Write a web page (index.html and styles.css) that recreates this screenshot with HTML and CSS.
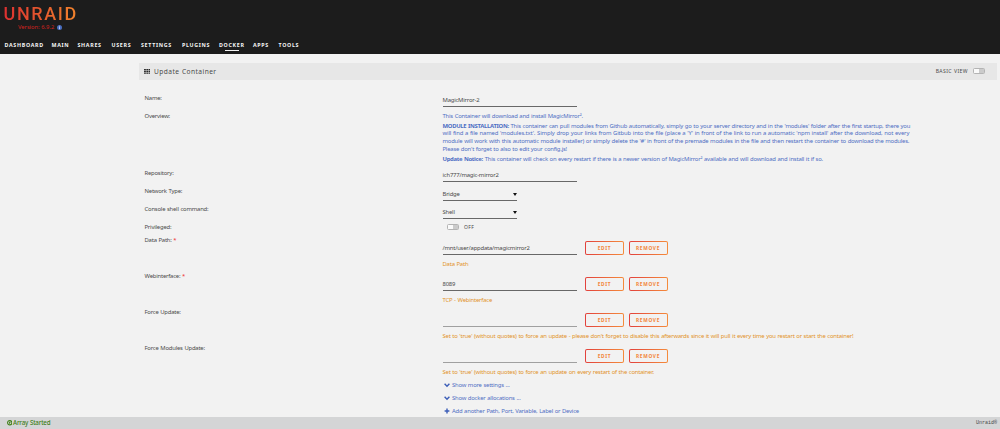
FILE: index.html
```html
<!DOCTYPE html>
<html>
<head>
    <meta charset="utf-8">
    <title>Update Container</title>
    <link rel="stylesheet" href="styles.css">
</head>
<body>
    <div id="header">
        <div class="logo">UNRAID</div>
        <div class="version">Version: 6.9.2
            <svg class="info" viewBox="0 0 12 12"><circle cx="6" cy="6" r="6" fill="#4a6ec0"/><path d="M6 2v2M6 5v5" stroke="#cdd8f5" stroke-width="2"/></svg>
        </div>
        <div id="menu">
            <a class="m1">DASHBOARD</a>
            <a class="m2">MAIN</a>
            <a class="m3">SHARES</a>
            <a class="m4">USERS</a>
            <a class="m5">SETTINGS</a>
            <a class="m6">PLUGINS</a>
            <a class="m7 active">DOCKER</a>
            <a class="m8">APPS</a>
            <a class="m9">TOOLS</a>
        </div>
    </div>

    <div id="title">
        <svg class="grid" viewBox="0 0 14 12"><path d="M0 0h4v3H0zM5 0h4v3H5zM10 0h4v3h-4zM0 4.5h4v3H0zM5 4.5h4v3H5zM10 4.5h4v3h-4zM0 9h4v3H0zM5 9h4v3H5zM10 9h4v3h-4z"/></svg>
        <span class="name">Update Container</span>
        <span class="view">BASIC VIEW</span>
        <span class="switch"></span>
    </div>

    <div id="form">
        <div class="row"><label>Name:</label><div class="input">MagicMirror-2</div></div>
        <div class="row overview">
            <label>Overview:</label>
            <div class="desc">
                <p>This Container will download and install MagicMirror².</p>
                <p><b>MODULE INSTALLATION:</b> This container can pull modules from Github automatically, simply go to your server directory and in the 'modules' folder after the first startup, there you<br>
                <span class="wide">will find a file named 'modules.txt'. Simply drop your links from Gitbub into the file (place a 'Y' in front of the link to run a automatic 'npm install' after the download, not every</span><br>
                module will work with this automatic module installer) or simply delete the '#' in front of the premade modules in the file and then restart the container to download the modules.<br>
                Please don't forget to also to edit your config.js!</p>
                <p><b>Update Notice:</b> This container will check on every restart if there is a newer version of MagicMirror² available and will download and install it if so.</p>
            </div>
        </div>
        <div class="row"><label>Repository:</label><div class="input">ich777/magic-mirror2</div></div>
        <div class="row"><label>Network Type:</label><div class="input select">Bridge<i></i></div></div>
        <div class="row"><label>Console shell command:</label><div class="input select">Shell<i></i></div></div>
        <div class="row privileged"><label>Privileged:</label><div class="toggle"><span class="switch"></span>OFF</div></div>

        <div class="row config">
            <label>Data Path: <em>*</em></label>
            <div>
                <div class="line"><div class="input">/mnt/user/appdata/magicmirror2</div><button>EDIT</button><button>REMOVE</button></div>
                <div class="hint">Data Path</div>
            </div>
        </div>
        <div class="row config">
            <label>Webinterface: <em>*</em></label>
            <div>
                <div class="line"><div class="input">8089</div><button>EDIT</button><button>REMOVE</button></div>
                <div class="hint">TCP - Webinterface</div>
            </div>
        </div>
        <div class="row config">
            <label>Force Update:</label>
            <div>
                <div class="line"><div class="input empty"></div><button>EDIT</button><button>REMOVE</button></div>
                <div class="hint">Set to 'true' (without quotes) to force an update - please don't forget to disable this afterwards since it will pull it every time you restart or start the container!</div>
            </div>
        </div>
        <div class="row config">
            <label>Force Modules Update:</label>
            <div>
                <div class="line"><div class="input empty"></div><button>EDIT</button><button>REMOVE</button></div>
                <div class="hint">Set to 'true' (without quotes) to force an update on every restart of the container.</div>
            </div>
        </div>

        <div class="links">
            <a><svg viewBox="0 0 10 10"><path d="M1 3l4 4 4-4"/></svg>Show more settings ...</a>
            <a><svg viewBox="0 0 10 10"><path d="M1 3l4 4 4-4"/></svg>Show docker allocations ...</a>
            <a><svg viewBox="0 0 10 10"><path d="M5 1v8M1 5h8"/></svg>Add another Path, Port, Variable, Label or Device</a>
        </div>
    </div>

    <div id="footer">
        <span class="status"><svg viewBox="0 0 12 12"><circle cx="6" cy="6" r="4.7" fill="none" stroke="#3f8018" stroke-width="2.4"/><path d="M4.5 3.5l4 2.5-4 2.5z" fill="#3f8018"/></svg>Array Started</span>
        <span class="copy">Unraid®</span>
    </div>
</body>
</html>
```
FILE: styles.css
```css
* {
    box-sizing: border-box;
}

body {
    margin: 0;
    height: 429px;
    overflow: hidden;
    display: flex;
    flex-direction: column;
    background: #f2f2f2;
    color: #4a4a4a;
    font: 5.9px/10px "Noto Sans", sans-serif;
    letter-spacing: -0.2px;
    word-spacing: 0.35px;
    white-space: nowrap;
}

#header {
    flex: none;
    height: 54px;
    background: #1c1c1c;
}

.logo {
    width: 76px;
    height: 15px;
    margin: 6px 0 0 3.5px;
    font: 500 18px/15px Roboto, sans-serif;
    letter-spacing: 1.6px;
    background: linear-gradient(90deg, #dc3030, #f0862c);
    -webkit-background-clip: text;
    background-clip: text;
    color: transparent;
}

.version {
    display: flex;
    align-items: center;
    height: 10px;
    margin: 1px 0 0 18px;
    color: #d0221e;
    font-size: 5.8px;
    letter-spacing: -0.05px;
}

.info {
    width: 5px;
    height: 5px;
    margin-left: 2.5px;
}

#menu {
    display: flex;
    margin: 8px 0 0 4.5px;
    color: #f6f6f6;
    font: bold 5.3px/11px "Noto Sans", sans-serif;
    letter-spacing: 0.7px;
}

#menu a {
    flex: none;
    height: 12px;
}

.m1 { width: 47px; }
.m2 { width: 26px; }
.m3 { width: 34px; }
.m4 { width: 29.5px; }
.m5 { width: 41px; }
.m6 { width: 37px; }
.m7 { width: 34px; }
.m8 { width: 25.5px; }

.active::after {
    content: "";
    display: block;
    width: 14px;
    height: 1px;
    margin: -1px 0 0 5.5px;
    background: #f2f2f2;
}

#title {
    flex: none;
    display: flex;
    align-items: center;
    height: 17px;
    margin: 9px 3px 0 139px;
    padding: 0 12px 0 4.5px;
    background: #e7e7e7;
}

.grid {
    width: 6.5px;
    height: 5.5px;
    margin-right: 4px;
    fill: #2a2a2a;
}

.name {
    font-size: 6.6px;
    letter-spacing: 0.45px;
}

.view {
    margin: -2px 5px 0 auto;
    font-size: 5.1px;
    letter-spacing: 0.4px;
}

.switch {
    width: 12px;
    height: 6px;
    border: 1px solid #b4b4b4;
    border-radius: 1.5px;
    background: linear-gradient(90deg, #fafafa 50%, #cbcbcb 50%);
}

#title .switch {
    margin-top: -2px;
}

#form {
    flex: 1;
    min-height: 0;
    padding: 13px 0 0 144.5px;
}

.row {
    display: grid;
    grid-template-columns: 298px 1fr;
    align-items: start;
    height: 18px;
}

.row.overview {
    height: 57px;
}

.row.privileged {
    height: 13px;
}

.row.config {
    height: 36.1px;
}

label em {
    color: #f02b2b;
    font-style: normal;
}

.input {
    width: 134px;
    height: 14px;
    border-bottom: 1px solid #686868;
    line-height: 15px;
}

.empty {
    border-color: #a0a0a0;
}

.select {
    display: flex;
    justify-content: space-between;
    align-items: center;
    width: 74px;
    height: 15px;
    padding-top: 2px;
}

.select i {
    border: 2px solid transparent;
    border-top: 3.5px solid #111;
    border-bottom: 0;
}

.desc {
    color: #4f6fc4;
    line-height: 7.7px;
}

.desc p {
    margin: 2px 0;
}

.desc b {
    letter-spacing: -0.28px;
}

.wide {
    letter-spacing: -0.13px;
}

.toggle {
    display: flex;
    align-items: center;
    padding-left: 4.5px;
    font-size: 5px;
    letter-spacing: 0.4px;
}

.toggle .switch {
    margin-right: 5px;
}

.line {
    display: flex;
    padding-top: 6px;
}

button {
    width: 39px;
    height: 14px;
    margin-right: 4.5px;
    padding: 0;
    border: 1px solid transparent;
    border-radius: 2px;
    background: linear-gradient(#f2f2f2, #f2f2f2) padding-box, linear-gradient(90deg, #e2413c, #f58c3c) border-box;
    color: #f3863a;
    font: bold 4.8px/12px "Noto Sans", sans-serif;
    letter-spacing: 0.7px;
}

.line .input {
    margin-right: 8.5px;
    line-height: 14px;
}

.hint {
    margin-top: 3.5px;
    color: #e29229;
    letter-spacing: -0.19px;
}

.links {
    margin-top: -0.9px;
}

.links a {
    display: flex;
    align-items: center;
    height: 13px;
    margin-left: 299px;
    padding-top: 0.5px;
    line-height: 14px;
    color: #4f6fc4;
}

.links svg {
    width: 6px;
    height: 6px;
    margin: -1px 2.5px 0 0;
    fill: none;
    stroke: #3c5eb8;
    stroke-width: 2.4;
}

#footer {
    flex: none;
    display: flex;
    justify-content: space-between;
    height: 12px;
    line-height: 12px;
    padding: 0 3px 0 6.5px;
    background: #d4d5d6;
}

.status {
    display: flex;
    align-items: center;
    color: #3f8018;
    font: 500 6.2px/12px "Noto Sans", sans-serif;
    letter-spacing: -0.17px;
}

.status svg {
    width: 5.5px;
    height: 5.5px;
    margin-right: 1px;
}

.copy {
    font: 5px/12px "Liberation Mono", monospace;
    letter-spacing: 0;
}
```
